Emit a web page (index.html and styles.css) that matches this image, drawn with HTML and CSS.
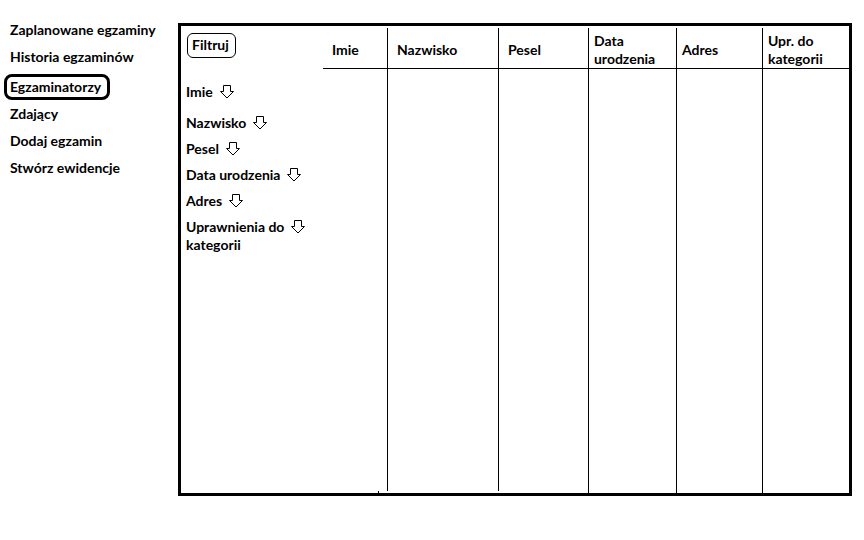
FILE: index.html
```html
<!DOCTYPE html>
<html lang="pl">
<head>
<meta charset="utf-8">
<meta name="viewport" content="width=device-width, initial-scale=1">
<title>Egzaminatorzy</title>
<link rel="stylesheet" href="styles.css">
</head>
<body>
<svg class="defs" aria-hidden="true">
  <symbol id="arrow" viewBox="0 0 14 14">
    <path d="M3.5 0.5H10.5V6.5H13.5L7 13L0.5 6.5H3.5Z" fill="#fff" stroke="#000"/>
  </symbol>
</svg>
<div class="page">
  <nav class="menu">
    <a class="menu-link" href="#">Zaplanowane egzaminy</a>
    <a class="menu-link" href="#">Historia egzaminów</a>
    <a class="menu-link active" href="#" aria-current="page">Egzaminatorzy</a>
    <a class="menu-link" href="#">Zdający</a>
    <a class="menu-link" href="#">Dodaj egzamin</a>
    <a class="menu-link" href="#">Stwórz ewidencje</a>
  </nav>
  <main class="panel">
    <form class="filters">
      <button class="apply" type="button">Filtruj</button>
      <div class="filter first"><label for="f-imie">Imie</label><button class="drop" id="f-imie" type="button"><svg class="arrow"><use href="#arrow"/></svg></button></div>
      <div class="filter"><label for="f-nazwisko">Nazwisko</label><button class="drop" id="f-nazwisko" type="button"><svg class="arrow"><use href="#arrow"/></svg></button></div>
      <div class="filter"><label for="f-pesel">Pesel</label><button class="drop" id="f-pesel" type="button"><svg class="arrow"><use href="#arrow"/></svg></button></div>
      <div class="filter"><label for="f-data">Data urodzenia</label><button class="drop" id="f-data" type="button"><svg class="arrow"><use href="#arrow"/></svg></button></div>
      <div class="filter"><label for="f-adres">Adres</label><button class="drop" id="f-adres" type="button"><svg class="arrow"><use href="#arrow"/></svg></button></div>
      <div class="filter"><label for="f-upr">Uprawnienia do<br>kategorii</label><button class="drop" id="f-upr" type="button"><svg class="arrow"><use href="#arrow"/></svg></button></div>
    </form>
    <table class="results">
      <colgroup>
        <col class="c-imie"><col class="c-nazwisko"><col class="c-pesel"><col class="c-data"><col class="c-adres"><col class="c-upr">
      </colgroup>
      <thead>
        <tr>
          <th class="wide" scope="col">Imie</th>
          <th class="wide" scope="col">Nazwisko</th>
          <th class="wide" scope="col">Pesel</th>
          <th scope="col">Data<br>urodzenia</th>
          <th scope="col">Adres</th>
          <th scope="col">Upr. do<br>kategorii</th>
        </tr>
      </thead>
      <tbody>
        <tr><td class="short"></td><td class="short"></td><td></td><td></td><td></td><td></td></tr>
      </tbody>
    </table>
  </main>
</div>
</body>
</html>
```
FILE: styles.css
```css
* {
  box-sizing: border-box;
}

body {
  margin: 0;
  background: #fff;
  color: #000;
  font: bold 14px/18px Lato, sans-serif;
}

.defs {
  display: none;
}

.page {
  display: grid;
  grid-template-columns: 178px 1fr;
  min-height: 100vh;
  padding: 0 12px 44px 0;
}

.menu {
  display: flex;
  flex-direction: column;
  align-items: flex-start;
  gap: 1px;
  padding: 17px 0 0 4px;
}

.menu-link {
  padding: 1px 6px 1px 3px;
  border: 3px solid transparent;
  border-radius: 8px;
  color: inherit;
  text-decoration: none;
  white-space: nowrap;
}

.menu-link.active {
  margin-top: 3px;
  border-color: #000;
}

.panel {
  position: relative;
  display: grid;
  grid-template-columns: 142px 1fr;
  margin-top: 23px;
  border: 3px solid #000;
}

/* small tick on the lower frame */
.panel::after {
  content: "";
  position: absolute;
  left: 197px;
  bottom: 0;
  width: 1px;
  height: 2px;
  background: #000;
}

.filters {
  display: flex;
  flex-direction: column;
  align-items: flex-start;
  gap: 8px;
  padding: 7px 0 0 5px;
}

button {
  color: inherit;
  font: inherit;
  background: none;
}

.apply {
  height: 25px;
  margin: 0 0 17px 1px;
  padding: 0 6px 2px 4px;
  border: 1px solid #000;
  border-radius: 6px;
}

.filter {
  display: flex;
  align-items: flex-start;
  gap: 7px;
  white-space: nowrap;
}

.filter.first {
  margin-bottom: 5px;
}

.drop {
  padding: 2px 0;
  border: 0;
}

.arrow {
  display: block;
  width: 14px;
  height: 14px;
}

.results {
  width: 100%;
  height: calc(100% - 2px);
  margin-top: 2px;
  border-spacing: 0;
  table-layout: fixed;
}

.c-imie { width: 12.36%; }
.c-nazwisko { width: 21.1%; }
.c-pesel { width: 17.11%; }
.c-data { width: 16.73%; }
.c-adres { width: 16.35%; }
.c-upr { width: 16.35%; }

th {
  height: 41px;
  padding: 4px 0 0 5px;
  border-right: 1px solid #000;
  border-bottom: 1px solid #000;
  text-align: left;
}

th.wide {
  padding-left: 9px;
}

th:last-child {
  border-right: 0;
}

td {
  padding: 0;
  background: linear-gradient(#000, #000) right top / 1px 100% no-repeat;
}

td.short {
  background-size: 1px calc(100% - 2px);
}

td:last-child {
  background: none;
}
```
